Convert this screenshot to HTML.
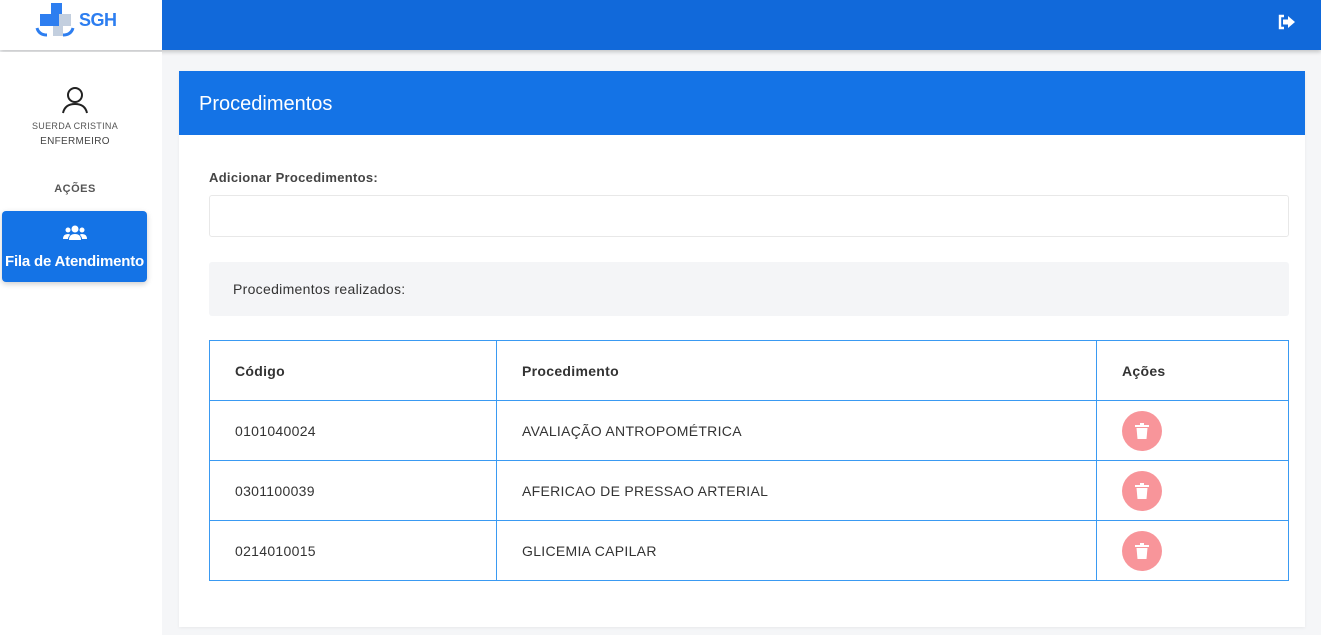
<!DOCTYPE html>
<html><head><meta charset="utf-8"><style>
*{box-sizing:border-box;margin:0;padding:0}
body{width:1321px;height:635px;overflow:hidden;background:#f5f6f8;font-family:"Liberation Sans",sans-serif;color:#333;position:relative}
.top{position:absolute;left:0;top:0;width:1321px;height:50px;background:#1169da;box-shadow:0 2px 4px rgba(0,0,0,.2)}
.logo{position:absolute;left:0;top:0;width:162px;height:50px;background:#fff}
.side{position:absolute;left:0;top:52px;width:162px;height:583px;background:#fff}
.card{position:absolute;left:179px;top:71px;width:1126px;height:556px;background:#fff;box-shadow:0 1px 3px rgba(0,0,0,.06)}
.ch{height:64px;background:#1473e6;color:#fff;font-size:20px;padding:22px 20px}
table{border-collapse:collapse;position:absolute;left:30px;top:269px;width:1080px;font-size:14px;color:#333}
td{border:1px solid #3a9af2;height:60px;padding-left:25px;letter-spacing:.3px}
th{border:1px solid #3a9af2;height:60px;padding-left:25px;text-align:left;font-size:14px;letter-spacing:.3px}
.del{width:40px;height:40px;border-radius:50%;background:#f8959a;display:flex;align-items:center;justify-content:center}
</style></head><body>
<div class="top">
<svg style="position:absolute;left:1278px;top:14px" width="18" height="16" viewBox="0 0 18 16"><path d="M6 2H2v12h4" fill="none" stroke="#fff" stroke-width="2.4"/><path d="M5 5.5h5V2l7 6-7 6v-3.5H5z" fill="#fff"/></svg>
</div>
<div class="logo">
<svg style="position:absolute;left:34px;top:2px" width="42" height="36" viewBox="0 0 42 36"><path d="M19 12h10v22h-10zM19 12h18v12h-18z" fill="#c3cfdf"/><path d="M17 1h11v11h-11zM6 12h19v12H6z" fill="#2d7ef0"/><path d="M3 26q2 7 10 7M39 26q-2 7-10 7" stroke="#2d7ef0" stroke-width="3" fill="none"/></svg>
<div style="position:absolute;left:79px;top:10px;color:#2d7ef0;font-weight:bold;font-size:18px;letter-spacing:-.5px">SGH</div>
</div>
<div class="side">
<svg style="position:absolute;left:61px;top:34px" width="28" height="28" viewBox="0 0 28 28"><circle cx="14" cy="9" r="7" fill="none" stroke="#222" stroke-width="2"/><path d="M2 27q2-9 12-9t12 9" fill="none" stroke="#222" stroke-width="2"/></svg>
<div style="position:absolute;left:0;width:150px;top:69px;text-align:center;font-size:9px;color:#555;letter-spacing:.3px">SUERDA CRISTINA</div>
<div style="position:absolute;left:0;width:150px;top:84px;text-align:center;font-size:10px;color:#444;letter-spacing:.3px">ENFERMEIRO</div>
<div style="position:absolute;left:0;width:150px;top:131px;text-align:center;font-size:11px;color:#555;font-weight:bold;letter-spacing:.5px">AÇÕES</div>
<div style="position:absolute;left:2px;top:159px;width:145px;height:71px;background:#1473e6;border-radius:4px;box-shadow:0 2px 6px rgba(0,0,0,.2);color:#fff;text-align:center">
<svg style="margin-top:14px" width="24" height="16" viewBox="0 0 24 16"><circle cx="12" cy="4" r="3.5" fill="#fff"/><circle cx="5" cy="5" r="2.5" fill="#fff"/><circle cx="19" cy="5" r="2.5" fill="#fff"/><path d="M6 15q0-6 6-6t6 6z M0 14q0-5 5-5 2 0 2 1-2 2-2 4z M24 14q0-5-5-5-2 0-2 1 2 2 2 4z" fill="#fff"/></svg>
<div style="font-weight:bold;font-size:15px;margin-top:7px;white-space:nowrap;letter-spacing:-.2px">Fila de Atendimento</div>
</div>
</div>
<div class="card">
<div class="ch">Procedimentos</div>
<div style="position:absolute;left:30px;top:99px;font-size:13px;font-weight:bold;color:#444;letter-spacing:.3px">Adicionar Procedimentos:</div>
<div style="position:absolute;left:30px;top:124px;width:1080px;height:42px;border:1px solid #e8e8e8;border-radius:3px"></div>
<div style="position:absolute;left:30px;top:191px;width:1080px;height:54px;background:#f4f5f7;border-radius:3px;padding:19px 24px;font-size:14px;color:#333;letter-spacing:.3px">Procedimentos realizados:</div>
<table>
<tr><th style="width:287px">Código</th><th style="width:600px">Procedimento</th><th>Ações</th></tr>
<tr><td>0101040024</td><td>AVALIAÇÃO ANTROPOMÉTRICA</td><td><div class="del"><svg width="14" height="16" viewBox="0 0 14 16"><rect x="0" y="2" width="14" height="2" fill="#fff"/><rect x="5" y="0" width="4" height="2" fill="#fff"/><path d="M1.5 5h11l-1 11h-9z" fill="#fff"/></svg></div></td></tr>
<tr><td>0301100039</td><td>AFERICAO DE PRESSAO ARTERIAL</td><td><div class="del"><svg width="14" height="16" viewBox="0 0 14 16"><rect x="0" y="2" width="14" height="2" fill="#fff"/><rect x="5" y="0" width="4" height="2" fill="#fff"/><path d="M1.5 5h11l-1 11h-9z" fill="#fff"/></svg></div></td></tr>
<tr><td>0214010015</td><td>GLICEMIA CAPILAR</td><td><div class="del"><svg width="14" height="16" viewBox="0 0 14 16"><rect x="0" y="2" width="14" height="2" fill="#fff"/><rect x="5" y="0" width="4" height="2" fill="#fff"/><path d="M1.5 5h11l-1 11h-9z" fill="#fff"/></svg></div></td></tr>
</table>
</div>
</body></html>
